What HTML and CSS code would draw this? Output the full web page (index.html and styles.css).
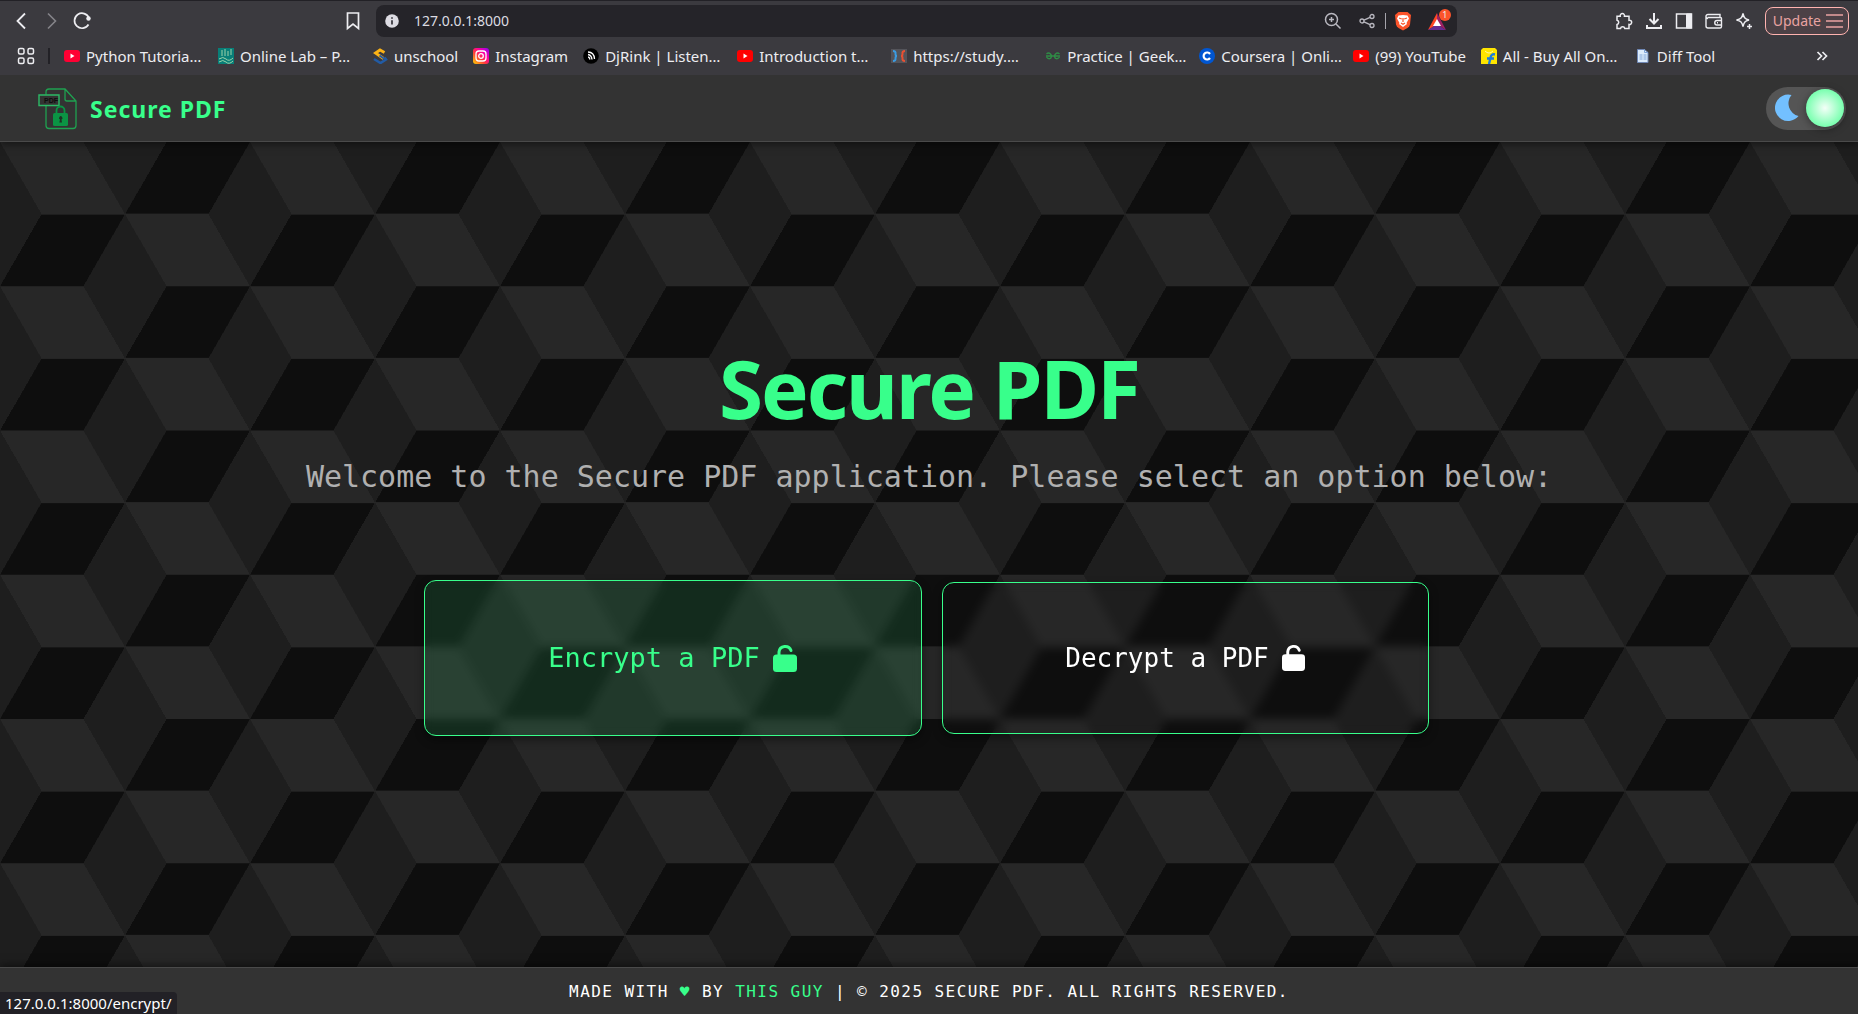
FILE: index.html
```html
<!DOCTYPE html>
<html lang="en">
<head>
<meta charset="utf-8">
<title>Secure PDF</title>
<link rel="stylesheet" href="styles.css">
</head>
<body>
<div class="browser">
  <div class="toolbar">
    <div class="nav-buttons">
      <button class="tool" aria-label="Back"><svg width="20" height="20" viewBox="0 0 20 20"><path d="M13 2.500 5.500 10l7.500 7.500" stroke-width="1.800"/></svg></button>
      <button class="tool dim" aria-label="Forward"><svg width="20" height="20" viewBox="0 0 20 20"><path d="M6 2.500 13.500 10 6 17.500" stroke-width="1.600"/></svg></button>
      <button class="tool" aria-label="Reload"><svg width="20" height="20" viewBox="0 0 20 20"><path d="M16.500 13.500A7.500 7.500 0 1 1 17 7" stroke-width="1.700"/><circle cx="16.500" cy="7.500" r="2.200" fill="currentColor" stroke="none"/></svg></button>
    </div>
    <button class="tool bookmark" aria-label="Bookmark this page"><svg width="16" height="20" viewBox="0 0 16 20"><path d="M2.500 2h11v15.500L8 13l-5.500 4.500z" stroke-width="1.700"/></svg></button>
    <div class="address">
      <svg class="info" width="14" height="14" viewBox="0 0 14 14"><circle cx="7" cy="7" r="6.800" fill="#dddce3" stroke="none"/><path d="M7 6.200v4.200M7 3.300v1.500" stroke="#28272d" stroke-width="1.600"/></svg>
      <input class="url" aria-label="Address" value="127.0.0.1:8000">
      <div class="address-tools">
        <button class="tool soft" aria-label="Zoom"><svg width="18" height="18" viewBox="0 0 18 18"><circle cx="7.500" cy="7.500" r="6" stroke-width="1.500"/><path d="m12 12 4.500 4.500M5 7.500h5M7.500 5v5" stroke-width="1.500"/></svg></button>
        <button class="tool soft" aria-label="Share"><svg width="16" height="16" viewBox="0 0 16 16"><circle cx="3" cy="8" r="2" stroke-width="1.300"/><circle cx="13" cy="3.500" r="2" stroke-width="1.300"/><circle cx="13" cy="12.500" r="2" stroke-width="1.300"/><path d="m5 7.200 6-2.800M5 8.800l6 2.800" stroke-width="1.300"/></svg></button>
        <span class="bar"></span>
        <button class="tool" aria-label="Shields"><svg width="18" height="20" viewBox="0 0 18 20"><path d="M4.500 1h9L17 4l-1 9.500q-.5 2-2.500 3.500L9 19.500 4.500 17Q2.500 15.500 2 13.500L1 4z" fill="#fb542b" stroke="none"/><path d="M4.500 4.500 9 4l4.500.5 1.500 3-2.500 4.500.5 1-4 3-4-3 .5-1L3 7.500z" fill="#fff" stroke="none"/><path d="m5 7 2.800 1M13 7l-2.800 1M9 7v4M7 12l2 1.200 2-1.200" stroke="#fb542b" stroke-width="1.200"/></svg></button>
        <button class="tool rewards" aria-label="Rewards"><svg width="24" height="24" viewBox="0 0 24 24"><path d="M10 4 1 21l9-5.500z" fill="#ff4724" stroke="none"/><path d="M1 21h18L10 15z" fill="#662d91" stroke="none"/><path d="m10 4 9 17-9-6z" fill="#9e1f63" stroke="none"/><path d="m10 10-4 7h8z" fill="#fff" stroke="none"/></svg><span class="badge">1</span></button>
      </div>
    </div>
    <div class="extensions">
      <button class="tool" aria-label="Extensions"><svg width="18" height="18" viewBox="0 0 18 18"><path d="M2 4.200h3.200a2.200 2.200 0 1 1 4.300 0H14v4a2.200 2.200 0 1 1 0 4.300V16.500H9.800a2.200 2.200 0 0 0-4.300 0H2v-4a2.200 2.200 0 0 0 0-4.300z" stroke-width="1.500"/></svg></button>
      <button class="tool" aria-label="Downloads"><svg width="18" height="18" viewBox="0 0 18 18"><path d="M9 1v10M4.500 7 9 11.500 13.500 7M2 13v3h14v-3" stroke-width="2"/></svg></button>
      <button class="tool" aria-label="Sidebar"><svg width="18" height="18" viewBox="0 0 18 18"><path d="M1.500 2h15v14h-15z" stroke-width="1.500"/><path d="M11.500 2h5v14h-5z" fill="currentColor"/></svg></button>
      <button class="tool" aria-label="Wallet"><svg width="18" height="18" viewBox="0 0 18 18"><path d="M15 5V2.500H3a2 2 0 0 0 0 4M1 4v10a2 2 0 0 0 2 2h12a1.500 1.500 0 0 0 1.500-1.500V6.500a1 1 0 0 0-1-1H2.500M16.500 8.500H12a2 2 0 0 0 0 4.500h4.500M12 10.700h1" stroke-width="1.400"/></svg></button>
      <button class="tool" aria-label="Leo AI"><svg width="18" height="18" viewBox="0 0 18 18"><path d="M8 1.500c1 4.500 2 5.500 6 6.500-4 1-5 2-6 6.500C7 10 6 9 1.500 8 6 7 7 6 8 1.500zM14.500 12v5M12 14.500h5" stroke-width="1.500"/></svg></button>
      <button class="update">Update<svg width="17" height="14" viewBox="0 0 17 14"><path d="M0 1h17M0 7h17M0 13h17" stroke-width="1.500"/></svg></button>
    </div>
  </div>
  <nav class="bookmarks" aria-label="Bookmarks">
    <button class="tool" aria-label="All bookmarks"><svg width="18" height="18" viewBox="0 0 18 18"><g stroke-width="1.500"><rect x="1.500" y="1.500" width="5.500" height="5.500" rx="1.500"/><rect x="11" y="1.500" width="5.500" height="5.500" rx="1.500"/><rect x="1.500" y="11" width="5.500" height="5.500" rx="1.500"/><rect x="11" y="11" width="5.500" height="5.500" rx="1.500"/></g></svg></button>
    <span class="divider"></span>
    <a class="mark long" href="#"><svg width="16" height="16" viewBox="0 0 16 16"><rect y="2" width="16" height="12" rx="3" fill="#ff0033" stroke="none"/><path d="m6.500 5.500 4 2.500-4 2.500z" fill="#fff" stroke="none"/></svg><span>Python Tutoria…</span></a>
    <a class="mark long" href="#"><svg width="16" height="16" viewBox="0 0 16 16"><path d="M0 0h16v16H0z" fill="#087f78" stroke="none"/><path d="M4 2v6M7 1v7M10 3v5M13 1v6M1 11q4-3 7 0t7-1M1 14q4-3 7 0t7-1" stroke="#9dd3a9"/></svg><span>Online Lab – P…</span></a>
    <a class="mark" href="#"><svg width="16" height="16" viewBox="0 0 16 16"><path d="M12.500 9.500 14 11.500 8.500 15 2 11" stroke="#225ba5" stroke-width="2.600"/><path d="M12.500 4.500 8 2 3.500 5l8 5.500" stroke="#fcb316" stroke-width="2.800"/><path d="m7.500 7.500 5 3.500" stroke="#225ba5" stroke-width="2"/></svg><span>unschool</span></a>
    <a class="mark" href="#"><svg width="16" height="16" viewBox="0 0 16 16"><defs><linearGradient id="ig" x1="0" y1="1" x2="1" y2="0"><stop offset="0" stop-color="#ffd600"/><stop offset=".4" stop-color="#ff3a3a"/><stop offset=".65" stop-color="#ff00a0"/><stop offset="1" stop-color="#8a00ff"/></linearGradient></defs><rect width="16" height="16" rx="3" fill="url(#ig)" stroke="none"/><rect x="3" y="3" width="10" height="10" rx="3" stroke="#fff" stroke-width="1.300"/><circle cx="8" cy="8" r="2.300" stroke="#fff" stroke-width="1.300"/></svg><span>Instagram</span></a>
    <a class="mark long" href="#"><svg width="16" height="16" viewBox="0 0 16 16"><circle cx="8" cy="8" r="7.800" fill="#000" stroke="none"/><path d="M5 4q6 0 6.500 7M5 6.500q3.500.5 4 5M5 9q1.500 0 2 2.500" stroke="#fff" stroke-width="1.300"/></svg><span>DjRink | Listen…</span></a>
    <a class="mark long" href="#"><svg width="16" height="16" viewBox="0 0 16 16"><rect y="2" width="16" height="12" rx="3" fill="#ff0000" stroke="none"/><path d="m6.500 5.500 4 2.500-4 2.500z" fill="#fff" stroke="none"/></svg><span>Introduction t…</span></a>
    <a class="mark long" href="#"><svg width="16" height="16" viewBox="0 0 16 16"><path d="M0 1h16v14H0z" fill="#54545a" stroke="none"/><path d="M2 3q3 0 2.500 3 0 2 1.500 2-1.500 0-1.500 2 .5 3-2.500 3" stroke="#3b9ce2" stroke-width="2"/><path d="M14 3q-3 0-2.500 3 0 2-1.500 2 1.500 0 1.500 2-.5 3 2.500 3" stroke="#e95032" stroke-width="2"/></svg><span>https://study.…</span></a>
    <a class="mark long" href="#"><svg width="16" height="16" viewBox="0 0 16 16"><path d="M1 8h14M1.500 6q2-2 4 0t0 4.500q-2.500 1-4-1.500M14.500 6q-2-2-4 0t0 4.500q2.500 1 4-1.500" stroke="#2f8d46" stroke-width="1.300"/></svg><span>Practice | Geek…</span></a>
    <a class="mark long" href="#"><svg width="16" height="16" viewBox="0 0 16 16"><circle cx="8" cy="8" r="8" fill="#0056d2" stroke="none"/><path d="M11 6a3.500 3.500 0 1 0 0 4" stroke="#fff" stroke-width="2.200"/></svg><span>Coursera | Onli…</span></a>
    <a class="mark" href="#"><svg width="16" height="16" viewBox="0 0 16 16"><rect y="2" width="16" height="12" rx="3" fill="#ff0000" stroke="none"/><path d="m6.500 5.500 4 2.500-4 2.500z" fill="#fff" stroke="none"/></svg><span>(99) YouTube</span></a>
    <a class="mark long" href="#"><svg width="16" height="16" viewBox="0 0 16 16"><path d="M0 2 2 0h12l2 2v14H0z" fill="#ffe500" stroke="none"/><path d="M4 3q4 4 8 0" stroke="#fff6a0"/><path d="M14 6.500q-4-1-4.500 3.500L8 16M6 10.500h7" stroke="#1d7bdc" stroke-width="2.400"/></svg><span>All - Buy All On…</span></a>
    <a class="mark" href="#"><svg width="16" height="16" viewBox="0 0 16 16"><path d="M2.500 1.500h7l3.500 3v10H2.500z" fill="#dcebfb" stroke="#6f87b5"/><path d="M9.500 1.500v3H13M4.500 7h3M4.500 9h3M4.500 11h3M8.500 7h3M8.500 9h3M8.500 11h3" stroke="#7ea4d8"/></svg><span>Diff Tool</span></a>
    <button class="tool more" aria-label="More bookmarks"><svg width="12" height="12" viewBox="0 0 12 12"><path d="m1.500 2 4 4-4 4M6.500 2l4 4-4 4" stroke-width="1.700"/></svg></button>
  </nav>
</div>

<header class="site-header">
  <a class="brand" href="#">
    <svg width="40" height="42" viewBox="0 0 40 42"><path d="M8 6.500V4a3 3 0 0 1 3-3h16l11 12v24.500a3 3 0 0 1-3 3H11a3 3 0 0 1-3-3V18M27 1v10a2 2 0 0 0 2 2h9" stroke="#1fa150" stroke-width="1.300"/><path d="M1 7h20v10.500H1z" stroke="#2cba66" stroke-width="1.400"/><text x="6" y="15" font-family="Liberation Sans" font-size="7" font-weight="700" fill="#0d0d0d" stroke="none">PDF</text><rect x="15" y="25" width="15" height="13" rx="1.500" fill="#0b9444" stroke="none"/><path d="M18.500 25v-2.500a4 4 0 0 1 8 0V25" stroke="#0b9444" stroke-width="1.800"/><path d="M21.300 34.500 22 31.500a1.700 1.700 0 1 1 1.500 0l.5 3z" fill="#1d3324" stroke="none"/></svg>
    <span>Secure PDF</span>
  </a>
  <label class="theme">
    <input type="checkbox" aria-label="Dark theme" checked>
    <svg width="24" height="28" viewBox="0 0 24 28"><path d="M16.500 1A13.200 13.200 0 1 0 23.500 22 13 13 0 0 1 16.500 1z" fill="#73c0ff" stroke="none"/></svg>
    <span class="knob"></span>
  </label>
</header>

<main class="hero">
  <h1>Secure PDF</h1>
  <p>Welcome to the Secure PDF application. Please select an option below:</p>
  <div class="options">
    <a class="option selected" href="#encrypt"><span>Encrypt a PDF</span><svg width="24" height="28" viewBox="0 0 24 28"><rect y="10.500" width="24" height="17.500" rx="3.500" fill="currentColor" stroke="none"/><path d="M6 12V8a6.200 6.200 0 0 1 12-1.500" stroke-width="3" stroke-linecap="round"/></svg></a>
    <a class="option" href="#decrypt"><span>Decrypt a PDF</span><svg width="23" height="27" viewBox="0 0 24 28"><rect y="10.500" width="24" height="17.500" rx="3.500" fill="currentColor" stroke="none"/><path d="M6 12V8a6.200 6.200 0 0 1 12-1.500" stroke-width="3" stroke-linecap="round"/></svg></a>
  </div>
</main>

<footer class="site-footer">
  <p>Made with <span class="heart">♥</span> by <a href="#">This Guy</a> | © 2025 Secure PDF. All rights reserved.</p>
  <div class="status">127.0.0.1:8000/encrypt/</div>
</footer>
</body>
</html>
```
FILE: styles.css
```css
:root {
  --accent: #38ff8b;
  --chrome: #3b3a3f;
  --panel: #333333;
  --s: 250px;
}

* { box-sizing: border-box; }

body {
  margin: 0;
  min-height: 100vh;
  display: flex;
  flex-direction: column;
  background: #1e1e1e;
  color: #ffffff;
  font-family: "DejaVu Sans Mono", monospace;
}

svg { flex: none; display: block; fill: none; stroke: currentColor; }
a { color: inherit; text-decoration: none; }
button, input { font: inherit; color: inherit; border: 0; background: none; padding: 0; }

.browser {
  position: relative;
  z-index: 2;
  height: 75px;
  background: var(--chrome);
  border-top: 1px solid #222126;
  color: #ededf1;
  font-family: "Noto Sans", sans-serif;
  font-size: 14px;
}

.toolbar { display: flex; align-items: center; height: 39px; }
.tool { display: flex; align-items: center; justify-content: center; position: relative; }
.dim { color: #858489; }
.soft { color: #b9b8c0; }
.nav-buttons { display: flex; gap: 10px; padding-left: 12px; }
.bookmark { margin-left: 253px; margin-right: 15px; }

.address {
  flex: 1;
  display: flex;
  align-items: center;
  height: 32px;
  padding: 0 6px 0 9px;
  border-radius: 8px;
  background: #252429;
}
.url { flex: 1; min-width: 0; margin-left: 15px; font-size: 14px; color: #dcdce2; outline: 0; }
.address-tools { display: flex; align-items: center; gap: 17px; }
.bar { width: 1px; height: 16px; margin: 0 -9px 0 -7px; background: #a5a4ab; }
.rewards { margin-left: -2px; }
.badge {
  position: absolute;
  top: 0;
  right: 0;
  width: 12px;
  height: 12px;
  border-radius: 6px;
  background: #fb542b;
  font-size: 9px;
  line-height: 12px;
  text-align: center;
}

.extensions { display: flex; align-items: center; gap: 12px; margin-left: 158px; padding-right: 9px; }
.update {
  display: flex;
  align-items: center;
  gap: 5px;
  height: 28px;
  padding: 0 5px 0 7px;
  border: 1px solid #ffb3b0;
  border-radius: 8px;
  background: #4c4146;
  color: #e9a3a2;
}

.bookmarks { display: flex; align-items: center; height: 32px; padding-left: 17px; font-size: 15px; }
.divider { width: 2px; height: 16px; margin: 0 14px 0 13px; background: #222126; }
.mark { display: flex; align-items: center; gap: 6px; margin-right: 15px; white-space: nowrap; }
.long { width: 139px; }
.more { margin-left: auto; margin-right: 30px; }

.site-header {
  position: relative;
  z-index: 1;
  display: flex;
  align-items: center;
  justify-content: space-between;
  height: 67px;
  padding: 0 12px 0 38px;
  background: var(--panel);
  border-bottom: 1px solid #4a4a4a;
  box-shadow: 0 2px 8px rgba(0, 0, 0, 0.5);
}
.brand {
  display: flex;
  align-items: center;
  gap: 12px;
  padding-top: 2px;
  color: var(--accent);
  font: 700 23px/32px "Noto Sans", sans-serif;
  letter-spacing: 1px;
}
.brand svg { letter-spacing: 0; }

.theme {
  display: flex;
  align-items: center;
  justify-content: space-between;
  width: 80px;
  height: 43px;
  padding: 0 2px 0 9px;
  border-radius: 22px;
  background: #555555;
}
.theme input { position: absolute; opacity: 0; }
.knob {
  width: 38px;
  height: 38px;
  border-radius: 50%;
  background: radial-gradient(circle, #f4fff8, #79ffaf 70%);
  box-shadow: 0 2px 8px rgba(0, 0, 0, 0.4);
}

.hero {
  flex: 1;
  display: flex;
  flex-direction: column;
  align-items: center;
  justify-content: center;
  padding-bottom: 36px;
  background:
    repeating-conic-gradient(from 30deg, #0000 0 120deg, #1e1e1e 0 180deg)
      calc(0.5 * var(--s)) calc(0.5 * var(--s) * 0.577),
    repeating-conic-gradient(from 30deg, #0e0e0e 0 60deg, #272727 0 120deg, #1e1e1e 0 180deg);
  background-size: var(--s) calc(var(--s) * 0.577);
}
.hero h1 {
  margin: 0;
  color: var(--accent);
  font: 700 80px/96px "Noto Sans", sans-serif;
  letter-spacing: -2px;
}
.hero p { margin: 18px 0 0; color: #b0b0b0; font-size: 30px; line-height: 45px; text-align: center; }

.options { display: flex; align-items: center; gap: 25px; margin-top: 83px; }
.option {
  display: flex;
  align-items: center;
  justify-content: center;
  gap: 13px;
  width: 487px;
  height: 152px;
  border: 1px solid var(--accent);
  border-radius: 12px;
  backdrop-filter: blur(5px);
  box-shadow: 0 4px 10px rgba(0, 0, 0, 0.4);
  font-size: 26px;
}
.selected {
  width: 498px;
  height: 156px;
  margin: -2px -5px -2px -6px;
  background: rgba(56, 255, 139, 0.12);
  color: var(--accent);
  font-size: 27px;
}

.site-footer {
  position: relative;
  display: flex;
  align-items: center;
  justify-content: center;
  height: 47px;
  background: var(--panel);
  border-top: 1px solid #4a4a4a;
  box-shadow: 0 -2px 8px rgba(0, 0, 0, 0.5);
}
.site-footer p { margin: 0; font-size: 16px; letter-spacing: 0.09em; text-transform: uppercase; }
.site-footer a, .heart { color: var(--accent); }
.status {
  position: absolute;
  left: 0;
  bottom: 0;
  height: 22px;
  padding: 0 6px 0 5px;
  border-top-right-radius: 4px;
  background: #222126;
  font: 15px/22px "Noto Sans", sans-serif;
}
```
